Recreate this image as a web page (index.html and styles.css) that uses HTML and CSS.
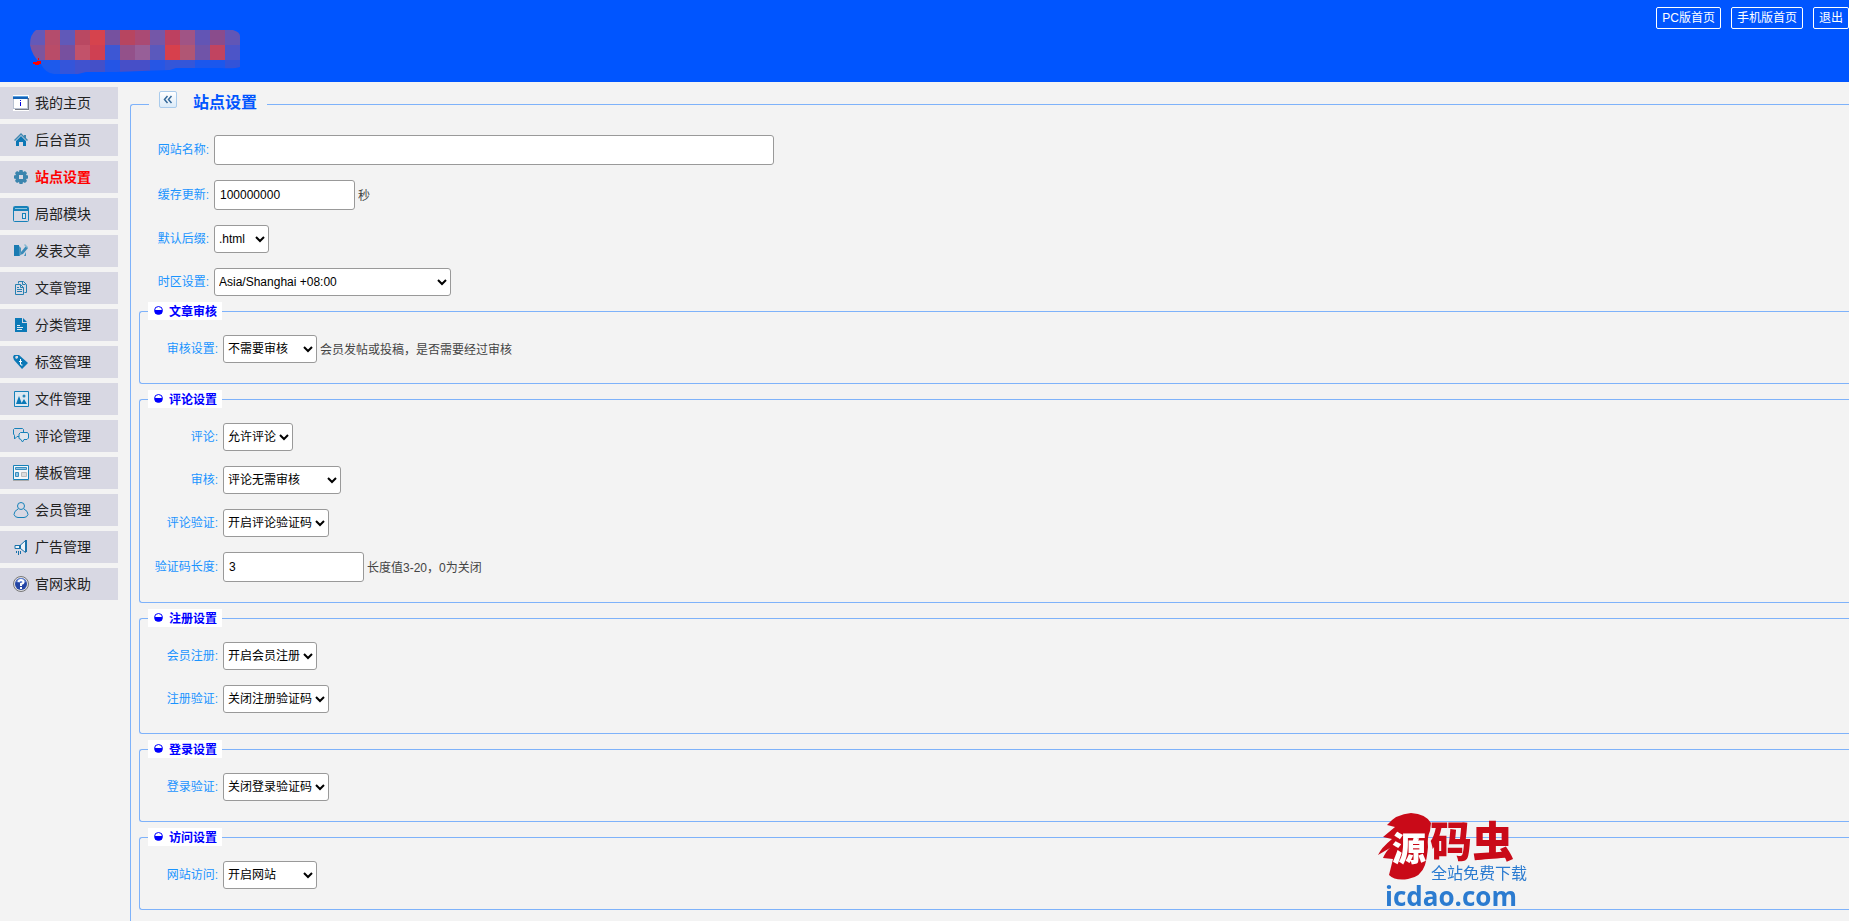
FILE: index.html
```
<!DOCTYPE html>
<html lang="zh-CN">

<head>
    <meta charset="UTF-8" />
    <meta name="viewport" content="width=device-width, initial-scale=1.0" />
    <title>站点设置</title>
    <link rel="stylesheet" href="styles.css">
</head>

<body>
    <header class="header">
        <svg class="logo" width="210" height="45" viewBox="0 0 210 45" shape-rendering="crispEdges">
            <defs>
                <clipPath id="logoShape">
                    <path d="M6 0H203Q210 2 210 6V37Q205 39 190 38L146 38L140 40L112 41L86 42L56 42L48 44H24Q15 43 11 34Q2 26 0 15Q0 4 6 0Z" />
                </clipPath>
            </defs>
            <g clip-path="url(#logoShape)">
                <path fill="#6459b8" d="M0 0h15v15H0z" />
                <path fill="#b44c6c" d="M15 0h15v15H15z" />
                <path fill="#6059b9" d="M30 0h15v15H30z" />
                <path fill="#b94862" d="M45 0h15v15H45z" />
                <path fill="#d6434d" d="M60 0h15v15H60z" />
                <path fill="#76519f" d="M75 0h15v15H75z" />
                <path fill="#b74560" d="M90 0h15v15H90z" />
                <path fill="#aa4a74" d="M105 0h15v15h-15z" />
                <path fill="#7457a8" d="M120 0h15v15h-15z" />
                <path fill="#bd4060" d="M135 0h15v15h-15z" />
                <path fill="#a05485" d="M150 0h15v15h-15z" />
                <path fill="#6255b5" d="M165 0h15v15h-15z" />
                <path fill="#8a4c8c" d="M180 0h15v15h-15z" />
                <path fill="#6156b6" d="M195 0h15v15h-15z" />
                <path fill="#7c559f" d="M0 15h15v15H0z" />
                <path fill="#b94c68" d="M15 15h15v15H15z" />
                <path fill="#77509f" d="M30 15h15v15H30z" />
                <path fill="#c2526a" d="M45 15h15v15H45z" />
                <path fill="#cf4052" d="M60 15h15v15H60z" />
                <path fill="#3d57d4" d="M75 15h15v15H75z" />
                <path fill="#93518a" d="M90 15h15v15H90z" />
                <path fill="#975f98" d="M105 15h15v15h-15z" />
                <path fill="#5a59bd" d="M120 15h15v15h-15z" />
                <path fill="#d7404c" d="M135 15h15v15h-15z" />
                <path fill="#b05674" d="M150 15h15v15h-15z" />
                <path fill="#7054a8" d="M165 15h15v15h-15z" />
                <path fill="#c14460" d="M180 15h15v15h-15z" />
                <path fill="#4c55c8" d="M195 15h15v15h-15z" />
                <path fill="#1d5aec" d="M0 30h30v15H0z" />
                <path fill="#3455da" d="M30 30h15v15H30z" />
                <path fill="#4052cf" d="M45 30h15v15H45z" />
                <path fill="#4450c8" d="M60 30h15v15H60z" />
                <path fill="#2455e6" d="M75 30h15v15H75z" />
                <path fill="#464fc8" d="M90 30h30v15H90z" />
                <path fill="#2656e5" d="M120 30h15v15h-15z" />
                <path fill="#3456d9" d="M135 30h30v15h-30z" />
                <path fill="#1b57ed" d="M165 30h30v15h-30z" />
                <path fill="#3253d9" d="M195 30h15v15h-15z" />
            </g>
            <path fill="#ff0000" d="M8 28h1v2H8zM7 31h4v3H9v1H5v-1H3v-2h4z" />
        </svg>
        <nav class="top-links">
            <a href="#">PC版首页</a>
            <a href="#">手机版首页</a>
            <a href="#">退出</a>
        </nav>
    </header>

    <div class="layout">
        <aside class="sidebar">
            <ul>
                <li><a href="#">
                    <svg class="icon" viewBox="0 0 16 16"><path fill="#fff" d="M0 0h16v16H0z" /><path fill="#777b85" d="M2 3h14v12H2z" /><path fill="#b9c2d2" d="M0 2h15v12H0z" /><path fill="#fff" d="M1 4h13v9H1z" /><path fill="#1463b8" d="M0 1h15v3H0z" /><path fill="#5aa0e0" d="M0 1h15v1H0z" /><path fill="#0000dd" d="M7 5h1v1H7zM7 7h1v4H7z" /></svg>
                    <span>我的主页</span></a></li>
                <li><a href="#">
                    <svg class="icon" viewBox="0 0 16 16"><path fill="#3f87b0" d="M8 1L1 8l1 1 6-6 6 6 1-1-2-2V3h-2v1z" /><path fill="#0b77b5" d="M8 4l5 5v5h-3v-4H6v4H3V9z" /></svg>
                    <span>后台首页</span></a></li>
                <li class="active"><a href="#">
                    <svg class="icon" viewBox="0 0 16 16"><path fill="#3b85ae" fill-rule="evenodd" d="M6.500 1h3l.5 2 2-1 2 2-1 2 2 .5v3l-2 .5 1 2-2 2-2-1-.5 2h-3L6 13l-2 1-2-2 1-2-2-.5v-3L3 6 2 4l2-2 2 1zM6 6v4h4V6z" /></svg>
                    <span>站点设置</span></a></li>
                <li><a href="#">
                    <svg class="icon" viewBox="0 0 16 16"><rect x=".5" y=".5" width="15" height="15" rx="1" fill="none" stroke="#1681b9" /><path fill="#1681b9" d="M1 1h14v4H1zM9 7h4v6H9z" /><path fill="#8fc5df" d="M2 2h12v1H2z" /><path fill="#dbe5ee" d="M10 8h2v4h-2z" /></svg>
                    <span>局部模块</span></a></li>
                <li><a href="#">
                    <svg class="icon" viewBox="0 0 16 16"><path fill="#1a7bb2" d="M1 2h5v11H1z" /><path fill="#4494be" d="M6 3l2 2v4l-1 4h4l2-4v4H6z" /><path fill="#3b8bb8" d="M8 9l5-6 2 2-5 6-3 1z" /><path fill="#84b7d2" d="M11 2l1-1 3 3-1 1z" /></svg>
                    <span>发表文章</span></a></li>
                <li><a href="#">
                    <svg class="icon" viewBox="0 0 16 16" fill="none" stroke="#2580b1"><path d="M5.500 3.500V1.500h5l3 3v8h-2M9.500 1.500v3h3" /><path d="M2.500 4.500h5l3 3v7h-8zM7.500 4.500v3h3M4 7.500h2M4 9.500h5M4 11.500h5" /></svg>
                    <span>文章管理</span></a></li>
                <li><a href="#">
                    <svg class="icon" viewBox="0 0 16 16"><path fill="#0b79b7" d="M2 1h7v5h5v9H2zM10 1l4 4h-4z" /><path fill="#dceaf3" d="M4 8h3v1H4zM4 10h6v1H4zM4 12h5v1H4z" /></svg>
                    <span>分类管理</span></a></li>
                <li><a href="#">
                    <svg class="icon" viewBox="0 0 16 16"><path fill="#0b79b7" fill-rule="evenodd" d="M1 1h5l9 8-6 6-8-9-1-3zM3 2L2 3l1 2 2-1V2z" /><path fill="none" stroke="#fff" d="M7.500 5v5q0 1.500 2 1M6 7.500h3" /></svg>
                    <span>标签管理</span></a></li>
                <li><a href="#">
                    <svg class="icon" viewBox="0 0 16 16"><path fill="#dce8f1" stroke="#1681b9" d="M1.500.5h14v15h-14z" /><path fill="#0b79b7" d="M3 13l3-8 3 8zM8 13l3-5 3 5z" /><circle cx="11" cy="5" r="1.500" fill="#2688bb" /></svg>
                    <span>文件管理</span></a></li>
                <li><a href="#">
                    <svg class="icon" viewBox="0 0 16 16" fill="none" stroke="#1681b9"><path d="M6 8.500H4L1.500 11V7.500L.5 6V1.500L1.500.5h8l1 1V4" /><path fill="#dfe5ed" d="M7.500 4.500h7l1 1.500v4l-1.500 1.500H11L9.500 14 8 11.500 6 10.500V6z" /></svg>
                    <span>评论管理</span></a></li>
                <li><a href="#">
                    <svg class="icon" viewBox="0 0 16 16"><path fill="#f5f7f9" stroke="#1681b9" d="M.5.5h15v14H.5z" /><path fill="#8fc7e8" stroke="#3a8dbd" d="M2.500 2.500h11v2h-11zM2.500 7.500h3v4h-3z" /><path fill="#ddd" stroke="#bbb" d="M8.500 7.500h5v4h-5z" /><path fill="#aaa" d="M0 15h16v1H0z" /></svg>
                    <span>模板管理</span></a></li>
                <li><a href="#">
                    <svg class="icon" viewBox="0 0 16 16" fill="none" stroke="#1681b9"><circle cx="8" cy="4" r="3.500" /><path d="M5 7Q1 9 1 12.500Q2 15.500 5 15.500H11Q14 15.500 15 12.500Q15 9 11 7" /></svg>
                    <span>会员管理</span></a></li>
                <li><a href="#">
                    <svg class="icon" viewBox="0 0 16 16"><path fill="#edf3f8" stroke="#1a72aa" d="M2 6.500h5l5.500-5v12l-5-4H2z" /><path fill="#1a72aa" d="M12 1h2v12h-2zM6 6h2v4H6zM3 12h1v2H3zM5 12h1v4H5zM7 12h1v3H7z" /></svg>
                    <span>广告管理</span></a></li>
                <li><a href="#">
                    <svg class="icon" viewBox="0 0 16 16"><circle cx="8" cy="8" r="7.500" fill="#e1e1e4" stroke="#777" /><circle cx="8" cy="8" r="6" fill="#2445a4" /><path fill="#6a8ad8" d="M3 6q2-4 5-4t5 4q-5 1-10 0" /><path fill="none" stroke="#fff" stroke-width="2" d="M5.500 6Q6 4 8 4t2.500 2Q10.500 7.500 8 8v2M8 11v2" /></svg>
                    <span>官网求助</span></a></li>
            </ul>
        </aside>

        <main>
            <form class="content">
                <fieldset class="panel">
                    <legend>
                        <button type="button" class="collapse" aria-label="收起">
                            <svg width="16" height="15" viewBox="0 0 16 15" fill="none" stroke="#35699a" stroke-width="1.500"><path d="M7.500 4L4.500 7.500l3 3.500M11.500 4L8.500 7.500l3 3.500" /></svg>
                        </button>
                        <span>站点设置</span>
                    </legend>

                    <div class="row">
                        <label for="siteName">网站名称:</label>
                        <input type="text" id="siteName" class="wide">
                    </div>
                    <div class="row">
                        <label for="cacheTime">缓存更新:</label>
                        <input type="text" id="cacheTime" value="100000000">
                        <span class="hint">秒</span>
                    </div>
                    <div class="row">
                        <label for="suffix">默认后缀:</label>
                        <select id="suffix" class="w-xs"><option>.html</option></select>
                    </div>
                    <div class="row">
                        <label for="timezone">时区设置:</label>
                        <select id="timezone" class="w-xxl"><option>Asia/Shanghai +08:00</option></select>
                    </div>

                    <fieldset class="group">
                        <legend><i class="dot"></i>文章审核</legend>
                        <div class="row">
                            <label for="postCheck">审核设置:</label>
                            <select id="postCheck" class="w-m"><option>不需要审核</option></select>
                            <span class="hint">会员发帖或投稿，是否需要经过审核</span>
                        </div>
                    </fieldset>

                    <fieldset class="group">
                        <legend><i class="dot"></i>评论设置</legend>
                        <div class="row">
                            <label for="comment">评论:</label>
                            <select id="comment" class="w-s"><option>允许评论</option></select>
                        </div>
                        <div class="row">
                            <label for="commentCheck">审核:</label>
                            <select id="commentCheck" class="w-xl"><option>评论无需审核</option></select>
                        </div>
                        <div class="row">
                            <label for="commentCode">评论验证:</label>
                            <select id="commentCode" class="w-l"><option>开启评论验证码</option></select>
                        </div>
                        <div class="row">
                            <label for="codeLength">验证码长度:</label>
                            <input type="text" id="codeLength" value="3">
                            <span class="hint">长度值3-20，0为关闭</span>
                        </div>
                    </fieldset>

                    <fieldset class="group">
                        <legend><i class="dot"></i>注册设置</legend>
                        <div class="row">
                            <label for="register">会员注册:</label>
                            <select id="register" class="w-m"><option>开启会员注册</option></select>
                        </div>
                        <div class="row">
                            <label for="registerCode">注册验证:</label>
                            <select id="registerCode" class="w-l"><option>关闭注册验证码</option></select>
                        </div>
                    </fieldset>

                    <fieldset class="group">
                        <legend><i class="dot"></i>登录设置</legend>
                        <div class="row">
                            <label for="loginCode">登录验证:</label>
                            <select id="loginCode" class="w-l"><option>关闭登录验证码</option></select>
                        </div>
                    </fieldset>

                    <fieldset class="group">
                        <legend><i class="dot"></i>访问设置</legend>
                        <div class="row">
                            <label for="visit">网站访问:</label>
                            <select id="visit" class="w-m"><option>开启网站</option></select>
                        </div>
                    </fieldset>
                </fieldset>
            </form>
        </main>
    </div>

    <div class="watermark">
        <svg class="seal" width="56" height="68" viewBox="0 0 56 68" fill="#c90a18"><path d="M9 12Q18 1 33 0Q48 1 53 10L52 18Q49 24 50 34Q49 45 47 52Q43 64 30 66Q17 68 11 62L15 46L5 45Q8 38 12 35L0 42Q3 35 14 26L5 24L17 14Z" /></svg>
        <div class="brand">
            <span class="seal-text">源</span>
            <span>码</span>
            <span>虫</span>
        </div>
        <p class="slogan">全站免费下载</p>
        <p class="domain">icdao.com</p>
    </div>
</body>

</html>
```
FILE: styles.css
```
* {
    margin: 0;
    padding: 0;
    box-sizing: border-box;
}

body {
    height: 100vh;
    overflow: hidden;
    display: flex;
    flex-direction: column;
    font-family: 'Liberation Sans', 'Noto Sans CJK SC', sans-serif;
    font-size: 12px;
    color: #444;
    background-color: #f3f3f3;
}

/* Header */
.header {
    flex: none;
    display: flex;
    justify-content: space-between;
    align-items: flex-start;
    height: 82px;
    padding-left: 30px;
    background-color: #0055ff;
}

.logo {
    margin-top: 30px;
}

.top-links {
    display: flex;
    gap: 10px;
    padding-top: 7px;
}

.top-links a {
    height: 22px;
    padding: 0 5px;
    line-height: 20px;
    color: #fff;
    text-decoration: none;
    border: 1px solid #fff;
    border-radius: 2px;
}

.layout {
    flex: 1;
    display: flex;
    min-height: 0;
}

/* Left menu */
.sidebar {
    flex: none;
    width: 118px;
    padding-top: 5px;
}

.sidebar ul {
    display: flex;
    flex-direction: column;
    gap: 5px;
    list-style: none;
}

.sidebar a {
    display: flex;
    align-items: center;
    gap: 6px;
    height: 32px;
    padding-left: 13px;
    font-size: 14px;
    color: #222;
    text-decoration: none;
    background-color: #d8d8e3;
}

.sidebar span {
    padding-bottom: 2px;
}

.sidebar .active a {
    color: #ff0000;
    font-weight: bold;
}

.icon {
    width: 16px;
    height: 16px;
}

/* Settings form */
main {
    flex: 1;
    min-width: 0;
    padding: 9px 0 0 12px;
}

.content {
    height: 100%;
}

.panel,
.group {
    border: 1px solid #7eb2fa;
    border-right: none;
    border-radius: 3px 0 0 3px;
}

.panel {
    min-height: 100%;
    padding: 17px 0 20px 0;
}

.panel > legend {
    display: flex;
    align-items: flex-start;
    gap: 16px;
    height: 27px;
    margin-left: 18px;
    padding: 0 10px;
    font-size: 16px;
    line-height: 24px;
    font-weight: bold;
    color: #0055ff;
}

.collapse {
    width: 18px;
    height: 17px;
    background: linear-gradient(#fff, #dcebf8);
    border: 1px solid #a9cbec;
    border-radius: 2px;
}

.collapse svg {
    display: block;
}

.group {
    margin: 6px 0 0 8px;
    padding: 15px 0 20px 0;
}

.group > legend {
    display: flex;
    align-items: center;
    gap: 6px;
    height: 18px;
    margin-left: 8px;
    padding: 0 5px 2px 6px;
    font-weight: bold;
    color: #0000ff;
    background-color: #fff;
}

.dot {
    width: 9px;
    height: 9px;
    border: 1px solid #0000ff;
    border-radius: 50%;
    background: linear-gradient(#fff 40%, #0000ff 40%);
}

.row {
    display: flex;
    align-items: center;
}

.row + .row {
    margin-top: 15px;
}

.row label {
    width: 78px;
    margin-right: 5px;
    padding-bottom: 4px;
    text-align: right;
    color: #1a94ff;
}

.hint {
    margin-left: 3px;
    padding-bottom: 2px;
}

input,
select {
    font-family: inherit;
    font-size: 12px;
    color: #000;
    background-color: #fff;
    border: 1px solid #999;
    border-radius: 3px;
}

input {
    width: 141px;
    height: 30px;
    padding: 0 5px;
}

input.wide {
    width: 560px;
}

select {
    height: 28px;
}

.w-xs {
    width: 55px;
}

.w-s {
    width: 70px;
}

.w-m {
    width: 94px;
}

.w-l {
    width: 106px;
}

.w-xl {
    width: 118px;
}

.w-xxl {
    width: 237px;
}

/* Watermark */
.watermark {
    position: fixed;
    right: 319px;
    bottom: 12px;
    width: 152px;
    height: 96px;
    color: #2b7bd0;
    pointer-events: none;
}

.seal {
    position: absolute;
    top: 0;
    left: 0;
}

.brand {
    position: relative;
    display: flex;
    align-items: flex-start;
    height: 52px;
    padding: 4px 0 0 14px;
    font-family: 'Noto Sans CJK SC', sans-serif;
    font-size: 42px;
    font-weight: 900;
    line-height: 44px;
    color: #c90a18;
}

.brand .seal-text {
    width: 38px;
    padding-top: 8px;
    font-size: 34px;
    color: #fff;
}

.slogan {
    padding-left: 53px;
    font-size: 16px;
    line-height: 18px;
}

.domain {
    padding-left: 7px;
    font-family: 'Open Sans', sans-serif;
    font-size: 26px;
    font-weight: bold;
    line-height: 26px;
}
```
